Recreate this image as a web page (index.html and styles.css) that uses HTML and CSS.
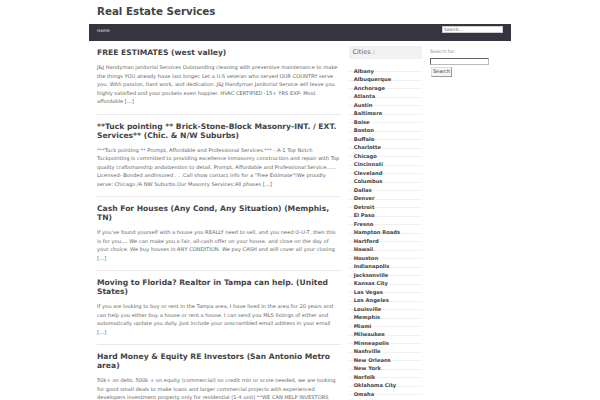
FILE: index.html
```html
<!DOCTYPE html>
<html>
<head>
<meta charset="utf-8">
<title>Real Estate Services</title>
<link rel="stylesheet" href="styles.css">
</head>
<body>
<div class="wrap">
  <header class="masthead">
    <h1 class="site-title">Real Estate Services</h1>
  </header>
  <nav class="navbar">
    <a class="nav-link" href="#">Home</a>
    <input class="nav-search" type="text" placeholder="Search...">
  </nav>
  <div class="content">
    <main class="main">
      <article class="post">
        <h2 class="post-title">FREE ESTIMATES (west valley)</h2>
        <p class="post-text">J&amp;J Handyman janitorial Services Outstanding cleaning with preventive maintenance to make the things YOU already have last longer. Let a U.S veteran who served OUR COUNTRY serve you. With passion, hard work, and dedication. J&amp;J Handyman Janitorial Service will leave you highly satisfied and your pockets even happier. HVAC CERTIFIED -15+ YRS EXP- Most affordable […]</p>
      </article>
      <article class="post">
        <h2 class="post-title">**Tuck pointing ** Brick-Stone-Block Masonry-INT. / EXT. Services** (Chic. &amp; N/W Suburbs)</h2>
        <p class="post-text">***Tuck pointing ** Prompt, Affordable and Professional Services.*** - A-1 Top Notch Tuckpointing is committed to providing excellence inmasonry construction and repair with Top quality craftsmanship andattention to detail. Prompt, Affordable and Professional Service...... Licensed- Bonded andInsured . . .Call show contact info for a "Free Estimate"!We proudly serve: Chicago /A NW Suburbs.Our Masonry Services:All phases […]</p>
      </article>
      <article class="post">
        <h2 class="post-title">Cash For Houses (Any Cond, Any Situation) (Memphis, TN)</h2>
        <p class="post-text">If you’ve found yourself with a house you REALLY need to sell, and you need O-U-T, then this is for you…. We can make you a fair, all-cash offer on your house, and close on the day of your choice. We buy houses in ANY CONDITION. We pay CASH and will cover all your closing […]</p>
      </article>
      <article class="post">
        <h2 class="post-title">Moving to Florida? Realtor in Tampa can help. (United States)</h2>
        <p class="post-text">If you are looking to buy or rent in the Tampa area, I have lived in the area for 20 years and can help you either buy a house or rent a house. I can send you MLS listings of either and automatically update you daily. Just include your unscrambled email address in your email […]</p>
      </article>
      <article class="post">
        <h2 class="post-title">Hard Money &amp; Equity RE Investors (San Antonio Metro area)</h2>
        <p class="post-text">50k+ on debt, 500k + on equity (commercial) no credit min or score needed, we are looking for good small deals to make loans and larger commercial projects with experienced developers investment property only for residential (1-4 unit) **WE CAN HELP INVESTORS WITH FLIPPING AND REHAB LOANS** please send us the details of your deal […]</p>
      </article>
    </main>
    <aside class="cities">
      <div class="cities-title">Cities :</div>
      <ul class="city-list">
        <li><a href="#">Albany</a></li>
        <li><a href="#">Albuquerque</a></li>
        <li><a href="#">Anchorage</a></li>
        <li><a href="#">Atlanta</a></li>
        <li><a href="#">Austin</a></li>
        <li><a href="#">Baltimore</a></li>
        <li><a href="#">Boise</a></li>
        <li><a href="#">Boston</a></li>
        <li><a href="#">Buffalo</a></li>
        <li><a href="#">Charlotte</a></li>
        <li><a href="#">Chicago</a></li>
        <li><a href="#">Cincinnati</a></li>
        <li><a href="#">Cleveland</a></li>
        <li><a href="#">Columbus</a></li>
        <li><a href="#">Dallas</a></li>
        <li><a href="#">Denver</a></li>
        <li><a href="#">Detroit</a></li>
        <li><a href="#">El Paso</a></li>
        <li><a href="#">Fresno</a></li>
        <li><a href="#">Hampton Roads</a></li>
        <li><a href="#">Hartford</a></li>
        <li><a href="#">Hawaii</a></li>
        <li><a href="#">Houston</a></li>
        <li><a href="#">Indianapolis</a></li>
        <li><a href="#">Jacksonville</a></li>
        <li><a href="#">Kansas City</a></li>
        <li><a href="#">Las Vegas</a></li>
        <li><a href="#">Los Angeles</a></li>
        <li><a href="#">Louisville</a></li>
        <li><a href="#">Memphis</a></li>
        <li><a href="#">Miami</a></li>
        <li><a href="#">Milwaukee</a></li>
        <li><a href="#">Minneapolis</a></li>
        <li><a href="#">Nashville</a></li>
        <li><a href="#">New Orleans</a></li>
        <li><a href="#">New York</a></li>
        <li><a href="#">Norfolk</a></li>
        <li><a href="#">Oklahoma City</a></li>
        <li><a href="#">Omaha</a></li>
        <li><a href="#">Orlando</a></li>
        <li><a href="#">Philadelphia</a></li>
      </ul>
    </aside>
    <aside class="searchbox">
      <label class="search-label" for="s">Search for:</label>
      <input class="search-input" id="s" type="text">
      <button class="search-btn" type="button">Search</button>
    </aside>
  </div>
</div>
</body>
</html>
```
FILE: styles.css
```css
* {
  box-sizing: border-box;
}

html,
body {
  margin: 0;
  padding: 0;
  background: #ffffff;
}

body {
  font-family: "DejaVu Sans", Verdana, sans-serif;
  color: #666666;
}

.wrap {
  width: 422px;
  margin: 0 auto;
}

.masthead {
  height: 24px;
  padding: 4px 8px 0;
}

.site-title {
  margin: 0;
  font-size: 10.3px;
  line-height: 15px;
  font-weight: bold;
  color: #444444;
}

.navbar {
  height: 17px;
  background: #35353f;
  display: flex;
  justify-content: space-between;
  align-items: flex-start;
  padding: 2px 8px 0 8px;
}

.nav-link {
  font-size: 4.3px;
  line-height: 9px;
  color: #e4e4e8;
  text-decoration: none;
}

.nav-search {
  width: 61px;
  height: 7px;
  margin: 0;
  padding: 0 1px;
  border: 1px solid #cfcfcf;
  background: #ffffff;
  font-family: "DejaVu Sans", sans-serif;
  font-size: 4.3px;
  color: #555555;
}

.nav-search::placeholder {
  color: #666666;
}

.content {
  display: flex;
  align-items: flex-start;
  padding: 0 8px;
}

.main {
  width: 244px;
  flex: none;
  margin-right: 8px;
}

.post {
  padding: 7px 0 8px 0;
  border-bottom: 1px solid #e8e8e8;
}

.post-title {
  margin: 0 0 6px;
  font-size: 7.6px;
  line-height: 9px;
  font-weight: bold;
  color: #444444;
}

.post-text {
  margin: 0;
  font-size: 5.15px;
  line-height: 8.5px;
  color: #666666;
}

.cities {
  width: 72.5px;
  flex: none;
  margin-top: 5px;
}

.cities-title {
  height: 12.7px;
  line-height: 12.7px;
  padding-left: 3.5px;
  background: #f1f1f3;
  font-size: 6.5px;
  color: #666666;
}

.city-list {
  list-style: none;
  margin: 5px 0 0;
  padding: 0;
}

.city-list li {
  height: 8.5px;
  line-height: 7.5px;
  padding-left: 4.7px;
  border-bottom: 1px solid #f0f0f0;
}

.city-list a {
  font-size: 5.2px;
  font-weight: bold;
  color: #444444;
  text-decoration: none;
}

.searchbox {
  width: 73px;
  flex: none;
  margin-left: 8.5px;
  margin-top: 7px;
  display: flex;
  flex-direction: column;
  align-items: flex-start;
}

.search-label {
  font-size: 4.7px;
  line-height: 7px;
  color: #888888;
}

.search-input {
  width: 59px;
  height: 7px;
  margin: 2.5px 0 0;
  padding: 0;
  border: 1px solid #bbbbbb;
  border-top-color: #666666;
  border-left-color: #666666;
  background: #ffffff;
}

.search-btn {
  margin: 2.5px 0 0 1px;
  width: 21px;
  height: 9.6px;
  padding: 0;
  font-family: "DejaVu Sans", sans-serif;
  font-size: 5px;
  line-height: 7px;
  color: #333333;
  background: #f6f6f6;
  border: 1px solid #999999;
  border-top-color: #dddddd;
  border-left-color: #dddddd;
}
```
